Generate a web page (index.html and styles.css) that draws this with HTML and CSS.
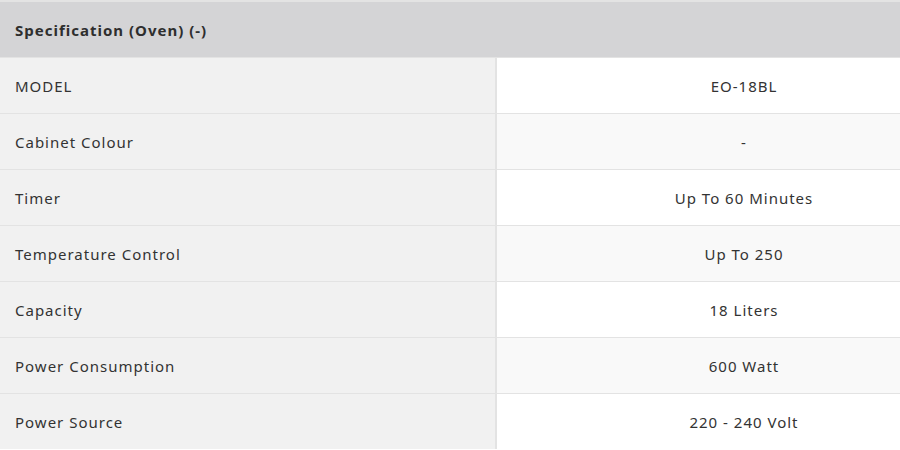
FILE: index.html
```html
<!DOCTYPE html>
<html>
<head>
<meta charset="utf-8">
<link rel="stylesheet" href="styles.css">
</head>
<body>
<div class="spec">
  <div class="spec-head">Specification (Oven) (-)</div>
  <div class="spec-row"><div class="label">MODEL</div><div class="value">EO-18BL</div></div>
  <div class="spec-row alt"><div class="label">Cabinet Colour</div><div class="value">-</div></div>
  <div class="spec-row"><div class="label">Timer</div><div class="value">Up To 60 Minutes</div></div>
  <div class="spec-row alt"><div class="label">Temperature Control</div><div class="value">Up To 250</div></div>
  <div class="spec-row"><div class="label">Capacity</div><div class="value">18 Liters</div></div>
  <div class="spec-row alt"><div class="label">Power Consumption</div><div class="value">600 Watt</div></div>
  <div class="spec-row"><div class="label">Power Source</div><div class="value">220 - 240 Volt</div></div>
</div>
</body>
</html>
```
FILE: styles.css
```css
html, body {
  margin: 0;
  padding: 0;
  background: #ffffff;
}
.spec {
  display: flex;
  flex-direction: column;
  gap: 1px;
  background: #e3e3e3;
  padding-top: 2px;
  font-family: "Noto Sans", "Open Sans", sans-serif;
  color: #333333;
  font-size: 15px;
  letter-spacing: 1px;
}
.spec-head {
  height: 55px;
  display: flex;
  align-items: center;
  padding-left: 15px;
  background: #d4d4d6;
  font-weight: 700;
  color: #2e2e2e;
}
.spec-row {
  display: grid;
  grid-template-columns: 495px 1fr;
  column-gap: 2px;
  height: 55px;
}
.label {
  background: #f1f1f1;
  display: flex;
  align-items: center;
  padding-left: 15px;
}
.value {
  background: #ffffff;
  display: flex;
  align-items: center;
  justify-content: center;
  padding-left: 91px;
}
.spec-row.alt .value {
  background: #f9f9f9;
}
```
